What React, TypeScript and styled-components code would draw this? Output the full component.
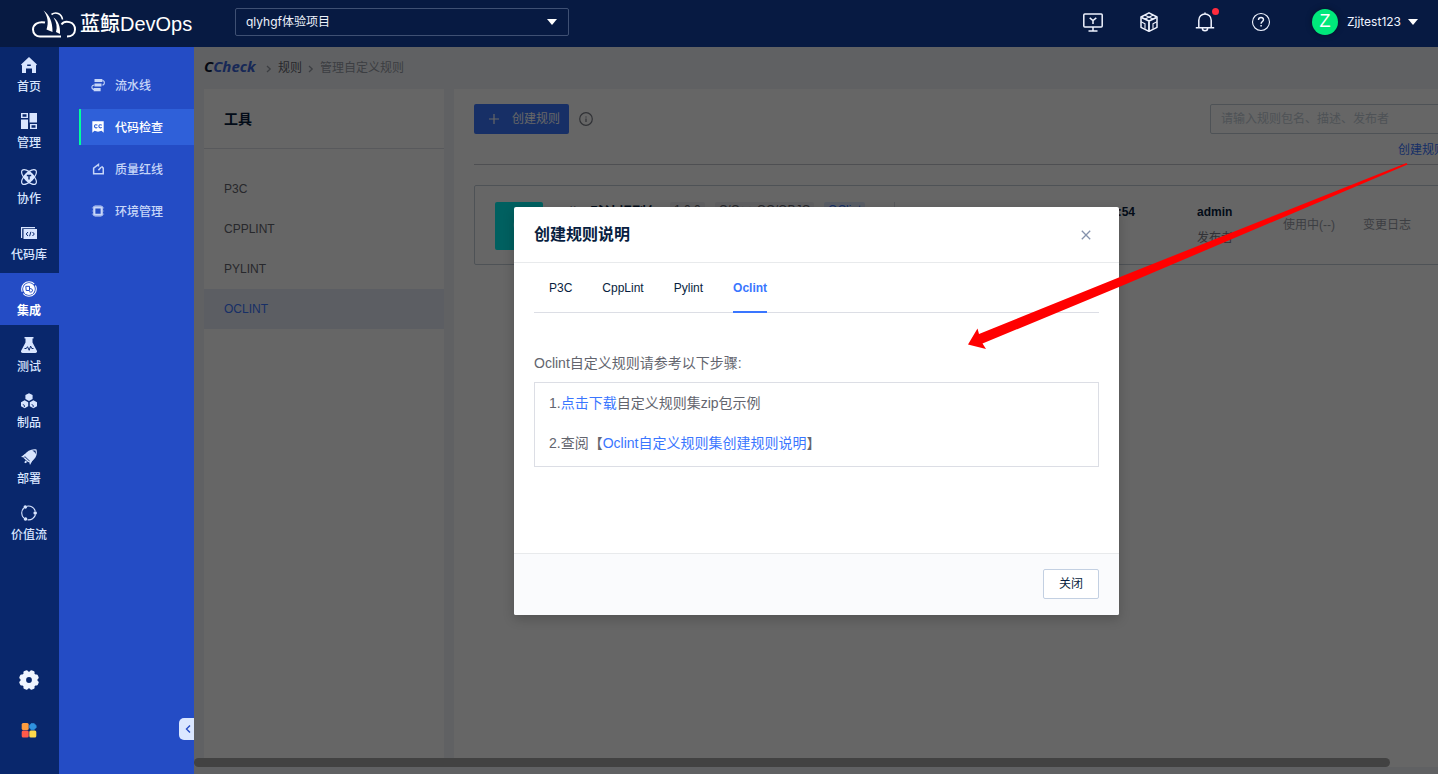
import React from "react";
import styled, { createGlobalStyle, css } from "styled-components";

const GlobalStyle = createGlobalStyle`
  *, *::before, *::after { box-sizing: border-box; }
  body {
    margin: 0;
    font-family: "Liberation Sans", "Noto Sans CJK SC", sans-serif;
    font-size: 12px;
    line-height: 20px;
    color: #63656e;
  }
  button, input, select { font: inherit; color: inherit; margin: 0; }
  button { padding: 0; border: 0; background: none; cursor: pointer; }
  a { color: #3a76ff; text-decoration: none; }
  ul, ol { margin: 0; padding: 0; list-style: none; }
  h1, h2, h3, p { margin: 0; }
  svg { display: block; flex: none; }
`;

const Shell = styled.div`
  position: relative;
  display: flex;
  flex-direction: column;
  min-height: 100vh;
  overflow: hidden;
`;

/* ---------- top bar ---------- */

const TopBar = styled.header`
  display: flex;
  align-items: center;
  height: 47px;
  padding: 0 20px 0 32px;
  background: #071a42;
  color: #f0f4ff;
  font-family: Inter, "Noto Sans CJK SC", sans-serif;
`;

const Brand = styled.a`
  display: flex;
  align-items: center;
  gap: 4px;
  width: 203px;
  color: #fff;
  font: 500 20px/28px "Liberation Sans", "Noto Sans CJK SC", sans-serif;
  white-space: nowrap;
`;

const BrandText = styled.span`
  padding-top: 1px;
`;

const ProjectPicker = styled.div`
  position: relative;
  width: 334px;
  height: 28px;
  margin-bottom: 3px;
`;

const ProjectSelect = styled.select`
  appearance: none;
  width: 100%;
  height: 100%;
  padding: 0 30px 0 10px;
  border: 1px solid #3f5073;
  border-radius: 2px;
  background: transparent;
  color: #eef2fb;
`;

const PickerCaret = styled.span`
  position: absolute;
  top: 11px;
  right: 12px;
  pointer-events: none;
`;

const TopActions = styled.nav`
  display: flex;
  align-items: center;
  gap: 32px;
  margin-left: auto;
  margin-bottom: 3px;
`;

const IconButton = styled.button`
  position: relative;
  display: flex;
  align-items: center;
  justify-content: center;
  width: 24px;
  height: 24px;
`;

const Dot = styled.span`
  position: absolute;
  top: -2px;
  right: -2px;
  width: 7px;
  height: 7px;
  border-radius: 50%;
  background: #ff2b3d;
`;

const UserButton = styled.button`
  display: flex;
  align-items: center;
  margin-left: 7px;
`;

const Avatar = styled.span`
  width: 26px;
  height: 26px;
  margin-right: 9px;
  border-radius: 50%;
  background: #00e87b;
  box-shadow: 0 0 6px rgba(0, 0, 0, 0.35);
  color: #fff;
  font: 18px/25px "Liberation Sans", sans-serif;
`;

const UserName = styled.span`
  margin-right: 7px;
`;

/* ---------- side navigation ---------- */

const Body = styled.div`
  display: flex;
  flex: 1;
  min-width: 0;
`;

const Rail = styled.nav`
  display: flex;
  flex-direction: column;
  flex: none;
  width: 59px;
  padding: 2px 0 34px;
  background: #09276c;
`;

const RailItem = styled.a<{ $active?: boolean }>`
  display: flex;
  flex-direction: column;
  align-items: center;
  gap: 6px;
  height: 52px;
  margin-bottom: 4px;
  padding: 8px 1px 0 0;
  line-height: 16px;
  font-weight: 500;
  color: #d8e5ff;
  ${(p) =>
    p.$active &&
    css`
      background: #244cc5;
      color: #fff;
      font-weight: 700;
    `}
`;

const RailTools = styled.div`
  display: flex;
  flex-direction: column;
  align-items: center;
  gap: 30px;
  margin-top: auto;
  padding-right: 1px;
`;

const RailTool = styled.button`
  display: flex;
  align-items: center;
  justify-content: center;
  width: 20px;
  height: 20px;
`;

const SubNav = styled.nav`
  position: relative;
  flex: none;
  width: 135px;
  padding: 20px 0 0 20px;
  background: #244cc5;
`;

const SubItem = styled.a<{ $active?: boolean }>`
  display: flex;
  align-items: center;
  gap: 10px;
  height: 36px;
  margin-bottom: 6px;
  padding-left: 10px;
  border-left: 2px solid transparent;
  color: #c7d6f8;
  font-weight: 500;
  ${(p) =>
    p.$active &&
    css`
      border-left-color: #00ff9d;
      background: #2f60d9;
      color: #fff;
    `}
`;

const SubLabel = styled.span`
  padding-top: 2px;
`;

const Collapse = styled.button`
  position: absolute;
  right: 0;
  bottom: 34px;
  display: flex;
  align-items: center;
  justify-content: center;
  width: 15px;
  height: 22px;
  padding-left: 3px;
  border-radius: 5px 0 0 5px;
  background: #dbe7ff;
  color: #244cc5;
`;

/* ---------- page ---------- */

const Stage = styled.main`
  position: relative;
  display: flex;
  flex: 1;
  min-width: 0;
  overflow: hidden;
  background: #f0f3f8;
`;

const Page = styled.div`
  display: flex;
  flex-direction: column;
  flex: 1 0 auto;
  min-width: 1296px;
  padding: 0 0 7px 10px;
`;

const Crumbs = styled.nav`
  display: flex;
  align-items: center;
  gap: 6px;
  height: 42px;
`;

const Logo = styled.span`
  width: 56px;
  padding-bottom: 4px;
  font: italic 700 15px/20px "Open Sans", sans-serif;
  color: #3a64d8;
`;

const LogoLead = styled.span`
  color: #0a1430;
`;

const CrumbLink = styled.a`
  color: #63656e;
`;

const CrumbHere = styled.span`
  color: #979ba5;
`;

const Columns = styled.div`
  display: flex;
  flex: 1;
  gap: 10px;
`;

const ToolPanel = styled.aside`
  flex: none;
  width: 240px;
  background: #fff;
`;

const ToolTitle = styled.h3`
  height: 60px;
  padding-left: 20px;
  border-bottom: 1px solid #dcdee5;
  color: #081e40;
  font-size: 14px;
  line-height: 60px;
`;

const ToolList = styled.ul`
  padding-top: 20px;
`;

const ToolItem = styled.a<{ $active?: boolean }>`
  display: block;
  padding-left: 20px;
  line-height: 40px;
  color: ${(p) => (p.$active ? "#3a76ff" : "#63656e")};
  background: ${(p) => (p.$active ? "#e6eaf8" : "transparent")};
`;

const RulePanel = styled.section`
  flex: 1;
  padding: 15px 20px;
  background: #fff;
`;

const Actions = styled.div`
  display: flex;
  align-items: center;
  height: 30px;
`;

const CreateButton = styled.button`
  display: flex;
  align-items: center;
  gap: 13px;
  width: 95px;
  height: 30px;
  margin-right: 10px;
  padding-left: 15px;
  border-radius: 2px;
  background: #3a76ff;
  color: #fff;
`;

const Search = styled.input`
  width: 260px;
  height: 30px;
  margin-left: auto;
  padding: 0 10px;
  border: 1px solid #c3cdd7;
  border-radius: 2px;
  background: #fff;
  &::placeholder { color: #c3cdd7; opacity: 1; }
`;

const Hint = styled.div`
  padding: 6px 0 4px;
  border-bottom: 1px solid #c4c6cc;
  text-align: right;
`;

const RuleCard = styled.article`
  display: flex;
  height: 80px;
  margin-top: 20px;
  padding: 16px 20px;
  border: 1px solid #c3cdd7;
  border-radius: 2px;
`;

const RuleBadge = styled.span`
  width: 48px;
  height: 48px;
  margin-right: 24px;
  border-radius: 2px;
  background: #00f0f0;
  color: #fff;
  font-size: 16px;
  line-height: 48px;
  text-align: center;
`;

const RuleMain = styled.div`
  display: flex;
  align-items: flex-start;
  width: 328px;
  height: 48px;
  border-right: 1px solid #dcdee5;
  white-space: nowrap;
`;

const RuleKind = styled.span`
  flex: none;
  width: 23px;
`;

const RuleName = styled.h3`
  flex: none;
  margin-right: 10px;
  color: #081e40;
  font-size: 14px;
  line-height: 20px;
`;

const Tag = styled.span<{ $blue?: boolean }>`
  flex: none;
  margin-right: 10px;
  padding: 0 4px 4px;
  border-radius: 2px;
  background: ${(p) => (p.$blue ? "#e1ecff" : "#f0f1f5")};
  color: ${(p) => (p.$blue ? "#3a76ff" : "#63656e")};
  line-height: 16px;
`;

const Fact = styled.div<{ $width: number }>`
  display: flex;
  flex-direction: column;
  gap: 6px;
  width: ${(p) => p.$width}px;
`;

const FactLabel = styled.span`
  color: #7b7d8a;
`;

const FactValue = styled.strong`
  color: #081e40;
`;

const TimeText = styled.time`
  display: block;
  padding-right: 62px;
  text-align: right;
`;

const RuleOp = styled.button`
  width: 80px;
  height: 46px;
  color: #979ba5;
  text-align: left;
`;

const ScrollThumb = styled.div`
  position: absolute;
  left: 0;
  right: 48px;
  bottom: 7px;
  height: 9px;
  border-radius: 5px;
  background: #a5a5a5;
`;

/* ---------- dialog ---------- */

const Mask = styled.div`
  position: absolute;
  inset: 0;
  display: flex;
  align-items: center;
  justify-content: center;
  padding: 1px 0 0 1px;
  background: rgba(0, 0, 0, 0.6);
`;

const Dialog = styled.div`
  width: 605px;
  border-radius: 2px;
  background: #fff;
  box-shadow: 0 4px 12px rgba(0, 0, 0, 0.2);
`;

const DialogHead = styled.div`
  display: flex;
  align-items: center;
  justify-content: space-between;
  height: 56px;
  padding: 0 28px 0 20px;
  border-bottom: 1px solid #e8eaec;
`;

const DialogTitle = styled.h2`
  color: #081e40;
  font-size: 16px;
  font-weight: 600;
  line-height: 24px;
`;

const CloseButton = styled.button`
  color: #8592ac;
`;

const DialogBody = styled.div`
  height: 290px;
  padding: 0 20px;
`;

const Tabs = styled.div`
  display: flex;
  gap: 30px;
  height: 50px;
  padding-left: 15px;
  border-bottom: 1px solid #dcdee5;
`;

const Tab = styled.button<{ $active?: boolean }>`
  height: 50px;
  padding-top: 2px;
  border-bottom: 2px solid ${(p) => (p.$active ? "#3a76ff" : "transparent")};
  color: ${(p) => (p.$active ? "#3a76ff" : "#081e40")};
  font-weight: ${(p) => (p.$active ? 700 : 400)};
`;

const Lead = styled.p`
  margin: 40px 0 9px;
  font-size: 14px;
`;

const Steps = styled.ol`
  padding: 0 14px 3px;
  border: 1px solid #dcdee5;
  font-size: 14px;
  line-height: 40px;
`;

const DialogFoot = styled.div`
  display: flex;
  align-items: center;
  justify-content: flex-end;
  height: 62px;
  padding: 0 20px 1px;
  border-top: 1px solid #e8eaec;
  border-radius: 0 0 2px 2px;
  background: #fafbfd;
`;

const PlainButton = styled.button`
  width: 56px;
  height: 30px;
  border: 1px solid #c3d0e2;
  border-radius: 2px;
  background: #fff;
  color: #081e40;
`;

const Pointer = styled.svg`
  position: absolute;
  top: 163px;
  left: 967px;
  pointer-events: none;
`;

/* ---------- drawings ---------- */

const Caret = () => (
  <svg width="10" height="6" viewBox="0 0 10 6" fill="#fff"><path d="M0 0h10L5 6z" /></svg>
);

const Chevron = () => (
  <svg width="6" height="10" viewBox="0 0 6 10" fill="none" stroke="#979ba5" strokeWidth="1.3"><path d="M1 3l3.200 3L1 9" /></svg>
);

const CloudLogo = () => (
  <svg width="44" height="28" viewBox="0 0 44 28" fill="none" stroke="#fff" strokeWidth="2">
    <path d="M13 12.500C6 11 1 14.500 1 19.500c0 4.500 3.500 7 7 7h21" />
    <path d="M19.500 4.500C23.500 1.500 29.500 3 30.500 9.500" strokeWidth="1.600" />
    <path d="M29.500 14.500c3-4.500 13.500-3.500 13.500 5 0 4.500-3.500 7-8 7" />
    <path d="M11.500.5c6 4.500 9 11 9 21.500l-6-2.500C17 12 15.500 6 11.500.5z" fill="#fff" stroke="none" />
    <path d="M21.500 7.500c4.500 3 7 8.500 6.500 16.500l-4-2C25.500 17 24.500 12 21.500 7.500z" fill="#fff" stroke="none" />
  </svg>
);

const Ico = ({ children, size = 16 }: { children: React.ReactNode; size?: number }) => (
  <svg width={size} height={size} viewBox="0 0 16 16" fill="currentColor">{children}</svg>
);

const railIcons: Record<string, React.ReactNode> = {
  home: <Ico><path fillRule="evenodd" d="M8 0l8 7.500-1 1V16h-4v-4.500H5V16H1V8.500l-1-1zM6.200 7.500v1.500h3.600V7.500z" /></Ico>,
  manage: (
    <Ico>
      <path fillRule="evenodd" d="M0 0h7v5H0zM1.500 1.300v2.400h4V1.300zM9 11h7v5H9zM10.500 12.300v2.400h4v-2.400z" />
      <path d="M8.500 0H16v9.500H8.500zM0 6.500h7V16H0z" />
    </Ico>
  ),
  team: (
    <Ico>
      <g fill="none" stroke="currentColor" strokeWidth="1.200">
        <ellipse cx="8" cy="8" rx="9.500" ry="4.300" transform="rotate(45 8 8)" />
        <ellipse cx="8" cy="8" rx="9.500" ry="4.300" transform="rotate(-45 8 8)" />
      </g>
      <path fillRule="evenodd" d="M8 2L14 8 8 14 2 8zM5.800 5.800v1.400h1.500v3.300h1.400V7.200h1.500V5.800z" />
    </Ico>
  ),
  code: (
    <Ico>
      <path d="M0 2h14v1.200H1.200V13H0z" />
      <path d="M2.500 4H16v10H2.500z" />
      <path d="M7 7L5.200 9 7 11M11.500 7l1.800 2-1.800 2M9.900 6.800l-1.300 4.400" fill="none" stroke="#09276c" strokeWidth="1" />
    </Ico>
  ),
  integrate: (
    <Ico>
      <circle cx="8" cy="8" r="7.300" fill="none" stroke="currentColor" strokeWidth="1.100" strokeDasharray="18 2 20 2 4" />
      <circle cx="8" cy="8" r="5.900" />
      <path d="M4.800 5.300h3.700v4.200H5.200zM8.500 7.500c2 0 3.200.8 3 2.300-.3 1.400-2 1.600-3.300.8" fill="none" stroke="#244cc5" strokeWidth="1" />
    </Ico>
  ),
  test: (
    <Ico>
      <path d="M3.500 0h9v1.500h-1v4L16 14c.2 1.200-.4 2-1.500 2h-13C.4 16-.2 15.200 0 14l4.500-8.500v-4h-1z" />
      <path d="M3.500 11.500h1.800l1.200-1.800 1.700 3.600 1.400-4.200 1.200 2.400h1.700" fill="none" stroke="#09276c" strokeWidth="1" />
    </Ico>
  ),
  artifact: (
    <Ico>
      <path d="M8 .2l3.600 1.900v4L8 8 4.400 6.100v-4zM3.600 7.300l3.600 2v4l-3.600 2-3.600-2v-4zM12.400 7.300l3.600 2v4l-3.600 2-3.600-2v-4z" />
      <path d="M1.800 11.500l1.600.8v1.800M10.600 11.500l1.600.8v1.800" fill="none" stroke="#09276c" strokeWidth=".9" />
    </Ico>
  ),
  deploy: (
    <Ico>
      <path fillRule="evenodd" d="M15.500.5c1.200 4.500-.5 9.200-5.500 12.500L3 6.300C6.200 1.500 11 -.5 15.500.5zM11.300 1.800c1.500.4 2.500 1.300 3 3l.5-.5c0-1-.1-1.800-.4-2.700-.9-.3-2-.3-3.100.2z" />
      <path d="M4.500 4.600L0 8l3.600.6zM11.800 11L9 16l-1-3.400zM3.200 7.500l5.400 4.900-1.300.9-4.700-4.200zM4.500 11.500l1.800 1.600-2 1.100-1 -1z" />
    </Ico>
  ),
  stream: (
    <Ico>
      <path d="M6 1.200A7 7 0 0 1 14.200 6M14.500 9.500A7 7 0 0 1 6.500 14.800M2.800 13A7 7 0 0 1 2.800 3" fill="none" stroke="currentColor" strokeWidth="1.100" />
      <circle cx="4.300" cy="2" r="1.800" /><circle cx="14.200" cy="8" r="1.800" /><circle cx="4.500" cy="14" r="1.800" />
    </Ico>
  ),
};

const subIcons: Record<string, React.ReactNode> = {
  pipeline: (
    <Ico size={14}>
      <path d="M4 1h9v3.600H4zM4 6.200h8v3.600H4zM3 11.400h8V15H3z" />
      <path d="M13 2.800c3 0 3 5.200 0 5.200M4 8c-4 0-4 5.200 0 5.200" fill="none" stroke="currentColor" strokeWidth="1.200" />
    </Ico>
  ),
  check: (
    <Ico size={14}>
      <path d="M1.500 1.500h13v13L12 12.300 8 13.500l-4-1.200-2.500 2.200z" />
      <path d="M7.300 6C5.800 4.800 4 5.500 4 7.200S5.800 9.500 7.300 8.400M12.300 6C10.800 4.800 9 5.500 9 7.200s1.800 2.300 3.300 1.200" fill="none" stroke="#2f60d9" strokeWidth="1.300" />
    </Ico>
  ),
  gate: (
    <Ico size={14}>
      <path d="M12 5l2 2v6.500H3V7l5.500-4.200V5M11.500 6L8.500 9.500" fill="none" stroke="currentColor" strokeWidth="1.700" />
    </Ico>
  ),
  env: (
    <Ico size={14}>
      <path fillRule="evenodd" d="M2.500 2.500h11v11h-11zM5 5v6h6V5z" />
      <path d="M1 4.500h1.500M1 8h1.500M1 11.500h1.500M13.500 4.500H15M13.500 8H15M13.500 11.500H15M4 1.800h8M4 14.200h8" stroke="currentColor" strokeWidth="1.400" opacity=".5" />
    </Ico>
  ),
};

const MonitorIcon = () => (
  <svg width="20" height="20" viewBox="0 0 20 20" fill="none" stroke="#f0f4ff" strokeWidth="1.500">
    <rect x="0.800" y="2" width="18.400" height="13" rx="1" />
    <path d="M10 15v4M5.500 19h9M6.700 5.800L10 8.500l3.300-2.700M10 8.500v3.500" />
  </svg>
);

const CubeIcon = () => (
  <svg width="20" height="20" viewBox="0 0 20 20" fill="none" stroke="#f0f4ff" strokeWidth="1.500" strokeLinejoin="round">
    <path d="M10 .8l8 4.200v10.300L10 19.300l-8-4V5z" />
    <path d="M2.500 5.500L10 9l7.500-3.500M10 9v10" strokeWidth="1.800" />
    <path d="M6 3.200l8 3.700M14 3.200L6 6.900" strokeWidth="1.100" />
    <path d="M2 9.800l4 2v5M18 9.800l-4 2v5" strokeWidth="1.100" />
  </svg>
);

const BellIcon = () => (
  <svg width="20" height="20" viewBox="0 0 20 20" fill="none" stroke="#f0f4ff" strokeWidth="1.500">
    <path d="M.8 15.800h18.400M3.800 15.500V8.200C3.800 4.700 6.500 2 10 2s6.200 2.700 6.200 6.200v7.300M7.300 16c0 1.700 1.200 2.800 2.700 2.800s2.700-1.100 2.700-2.800M10 .5V2" />
  </svg>
);

const HelpIcon = () => (
  <svg width="20" height="20" viewBox="0 0 20 20" fill="none" stroke="#f0f4ff" strokeWidth="1.100">
    <circle cx="10" cy="10" r="8.500" />
    <path d="M7.500 8c0-1.500 1-2.500 2.500-2.500s2.500 1 2.500 2.300c0 1.700-2.400 1.900-2.400 4" strokeWidth="1.400" />
    <path d="M10.100 13v1.500" strokeWidth="1.500" />
  </svg>
);

const gearTeeth = [22.5, 67.5, 112.5, 157.5, 202.5, 247.5, 292.5, 337.5];

const GearIcon = () => (
  <svg width="20" height="20" viewBox="0 0 20 20">
    <g fill="#f0f5ff">
      {gearTeeth.map((a) => (
        <rect key={a} x="7.600" y="0" width="4.800" height="6" rx="1.600" transform={`rotate(${a} 10 10)`} />
      ))}
      <path fillRule="evenodd" d="M10 1.400a8.600 8.600 0 1 0 0 17.200 8.600 8.600 0 0 0 0-17.200zM10 7.100a2.900 2.900 0 1 1 0 5.800 2.900 2.900 0 0 1 0-5.800z" />
    </g>
  </svg>
);

const AppsIcon = () => (
  <svg width="16" height="16" viewBox="0 0 16 16">
    <rect x="0.700" y="1" width="7" height="7" rx="1.500" fill="#ff9c3f" />
    <path d="M10.200 1.500h2.800l2.200 2v2l-2.200 2.300h-2.800L8.300 5.500v-2z" fill="#2f92e0" stroke="#2f92e0" strokeWidth=".6" strokeLinejoin="round" />
    <rect x="0.700" y="8.600" width="7" height="7" rx="1.500" fill="#ff5a4a" />
    <rect x="8.300" y="8.600" width="7" height="7" rx="1.500" fill="#ffd94a" />
  </svg>
);

/* ---------- data ---------- */

const railItems: [string, string][] = [
  ["home", "首页"], ["manage", "管理"], ["team", "协作"], ["code", "代码库"], ["integrate", "集成"],
  ["test", "测试"], ["artifact", "制品"], ["deploy", "部署"], ["stream", "价值流"],
];
const subItems: [string, string][] = [
  ["pipeline", "流水线"], ["check", "代码检查"], ["gate", "质量红线"], ["env", "环境管理"],
];
const tools = ["P3C", "CPPLINT", "PYLINT", "OCLINT"];
const tabs = ["P3C", "CppLint", "Pylint", "Oclint"];

export default function App() {
  return (
    <Shell>
      <GlobalStyle />
      <TopBar>
        <Brand href="#"><CloudLogo /><BrandText>蓝鲸DevOps</BrandText></Brand>
        <ProjectPicker>
          <ProjectSelect aria-label="项目"><option>qlyhgf体验项目</option></ProjectSelect>
          <PickerCaret><Caret /></PickerCaret>
        </ProjectPicker>
        <TopActions>
          <IconButton aria-label="控制台"><MonitorIcon /></IconButton>
          <IconButton aria-label="组件"><CubeIcon /></IconButton>
          <IconButton aria-label="通知"><BellIcon /><Dot /></IconButton>
          <IconButton aria-label="帮助"><HelpIcon /></IconButton>
          <UserButton>
            <Avatar>Z</Avatar>
            <UserName>Zjjtest123</UserName>
            <Caret />
          </UserButton>
        </TopActions>
      </TopBar>

      <Body>
        <Rail>
          {railItems.map(([icon, label]) => (
            <RailItem key={icon} href="#" $active={icon === "integrate"}>{railIcons[icon]}{label}</RailItem>
          ))}
          <RailTools>
            <RailTool aria-label="设置"><GearIcon /></RailTool>
            <RailTool aria-label="应用"><AppsIcon /></RailTool>
          </RailTools>
        </Rail>

        <SubNav>
          {subItems.map(([icon, label]) => (
            <SubItem key={icon} href="#" $active={icon === "check"}>{subIcons[icon]}<SubLabel>{label}</SubLabel></SubItem>
          ))}
          <Collapse aria-label="收起">
            <svg width="6" height="10" viewBox="0 0 6 10" fill="none" stroke="currentColor" strokeWidth="1.400"><path d="M5 1.500L1.500 5 5 8.500" /></svg>
          </Collapse>
        </SubNav>

        <Stage>
          <Page>
            <Crumbs>
              <Logo><LogoLead>C</LogoLead>Check</Logo>
              <Chevron />
              <CrumbLink href="#">规则</CrumbLink>
              <Chevron />
              <CrumbHere>管理自定义规则</CrumbHere>
            </Crumbs>
            <Columns>
              <ToolPanel>
                <ToolTitle>工具</ToolTitle>
                <ToolList>
                  {tools.map((t) => (
                    <li key={t}><ToolItem href="#" $active={t === "OCLINT"}>{t}</ToolItem></li>
                  ))}
                </ToolList>
              </ToolPanel>
              <RulePanel>
                <Actions>
                  <CreateButton>
                    <svg width="10" height="10" viewBox="0 0 10 10" stroke="#fff" strokeWidth="1.200"><path d="M5 0v10M0 5h10" /></svg>
                    创建规则
                  </CreateButton>
                  <svg width="14" height="14" viewBox="0 0 14 14" fill="none" stroke="#7a7d87" strokeWidth="1.200">
                    <circle cx="7" cy="7" r="6.300" /><path d="M7 6.500v3.500M7 4.500v1" />
                  </svg>
                  <Search aria-label="搜索" placeholder="请输入规则包名、描述、发布者" />
                </Actions>
                <Hint><a href="#">创建规则说明</a></Hint>
                <RuleCard>
                  <RuleBadge>O</RuleBadge>
                  <RuleMain>
                    <RuleKind>公</RuleKind>
                    <RuleName>默认规则包</RuleName>
                    <Tag>1.0.0</Tag>
                    <Tag>C/C++,OC/OBJC</Tag>
                    <Tag $blue>OClint</Tag>
                  </RuleMain>
                  <Fact $width={302}><FactValue><TimeText>2020-12-08 19:32:54</TimeText></FactValue></Fact>
                  <Fact $width={86}><FactValue>admin</FactValue><FactLabel>发布者</FactLabel></Fact>
                  <RuleOp>使用中(--)</RuleOp>
                  <RuleOp>变更日志</RuleOp>
                </RuleCard>
              </RulePanel>
            </Columns>
          </Page>
          <ScrollThumb />

          <Mask>
            <Dialog role="dialog" aria-label="创建规则说明">
              <DialogHead>
                <DialogTitle>创建规则说明</DialogTitle>
                <CloseButton aria-label="关闭窗口">
                  <svg width="10" height="10" viewBox="0 0 10 10" stroke="currentColor" strokeWidth="1.300"><path d="M.8.8l8.400 8.400M9.200.8L.8 9.200" /></svg>
                </CloseButton>
              </DialogHead>
              <DialogBody>
                <Tabs role="tablist">
                  {tabs.map((t) => (
                    <Tab key={t} role="tab" aria-selected={t === "Oclint"} $active={t === "Oclint"}>{t}</Tab>
                  ))}
                </Tabs>
                <Lead>Oclint自定义规则请参考以下步骤:</Lead>
                <Steps>
                  <li>1.<a href="#">点击下载</a>自定义规则集zip包示例</li>
                  <li>2.查阅【<a href="#">Oclint自定义规则集创建规则说明</a>】</li>
                </Steps>
              </DialogBody>
              <DialogFoot><PlainButton>关闭</PlainButton></DialogFoot>
            </Dialog>
          </Mask>
        </Stage>
      </Body>

      <Pointer width="442" height="188" viewBox="0 0 442 188" fill="#f00" aria-hidden="true">
        <path d="M1 181.500L10.500 165.500 12 171 158 112 439.500 0 440.500 1.500 158 121.500 15.500 180.500 19 186z" />
      </Pointer>
    </Shell>
  );
}
